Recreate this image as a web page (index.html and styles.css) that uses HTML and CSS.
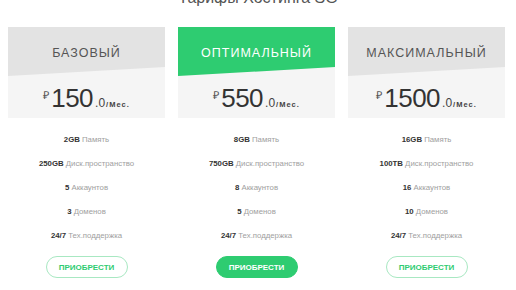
FILE: index.html
```html
<!DOCTYPE html>
<html lang="ru">
<head>
<meta charset="utf-8">
<link rel="stylesheet" href="styles.css">
</head>
<body>
<h1 class="page-title">Тарифы Хостинга SG</h1>
<div class="plans">
  <div class="plan">
    <div class="plan-head"><div class="plan-name">БАЗОВЫЙ</div></div>
    <div class="price"><span class="cur">₽</span><span class="amount">150</span><span class="dec">.0</span><span class="per">/Мес.</span></div>
    <ul class="features">
      <li><b>2GB</b> Память</li>
      <li><b>250GB</b> Диск.пространство</li>
      <li><b>5</b> Аккаунтов</li>
      <li><b>3</b> Доменов</li>
      <li><b>24/7</b> Тех.поддержка</li>
    </ul>
    <a class="btn">ПРИОБРЕСТИ</a>
  </div>
  <div class="plan plan-featured">
    <div class="plan-head"><div class="plan-name">ОПТИМАЛЬНЫЙ</div></div>
    <div class="price"><span class="cur">₽</span><span class="amount">550</span><span class="dec">.0</span><span class="per">/Мес.</span></div>
    <ul class="features">
      <li><b>8GB</b> Память</li>
      <li><b>750GB</b> Диск.пространство</li>
      <li><b>8</b> Аккаунтов</li>
      <li><b>5</b> Доменов</li>
      <li><b>24/7</b> Тех.поддержка</li>
    </ul>
    <a class="btn btn-solid">ПРИОБРЕСТИ</a>
  </div>
  <div class="plan">
    <div class="plan-head"><div class="plan-name">МАКСИМАЛЬНЫЙ</div></div>
    <div class="price"><span class="cur">₽</span><span class="amount">1500</span><span class="dec">.0</span><span class="per">/Мес.</span></div>
    <ul class="features">
      <li><b>16GB</b> Память</li>
      <li><b>100TB</b> Диск.пространство</li>
      <li><b>16</b> Аккаунтов</li>
      <li><b>10</b> Доменов</li>
      <li><b>24/7</b> Тех.поддержка</li>
    </ul>
    <a class="btn">ПРИОБРЕСТИ</a>
  </div>
</div>
</body>
</html>
```
FILE: styles.css
```css
html, body {
  margin: 0;
  padding: 0;
  background: #ffffff;
  font-family: "Liberation Sans", Arial, sans-serif;
  overflow: hidden;
}
.page-title {
  margin: -13px 0 0;
  height: 22px;
  line-height: 22px;
  font-size: 16px;
  font-weight: normal;
  color: #555;
  text-align: center;
}
.plans {
  display: grid;
  grid-template-columns: repeat(3, 157px);
  column-gap: 13px;
  padding: 18px 0 0 8px;
}
.plan {
  display: flex;
  flex-direction: column;
  align-items: center;
  background: linear-gradient(#f5f5f5, #f5f5f5) top / 100% 91px no-repeat;
}
.plan-head,
.price {
  align-self: stretch;
}
.plan-head {
  height: 49px;
  background: #e3e3e3;
  clip-path: polygon(0 0, 100% 0, 100% 40px, 0 100%);
  display: flex;
  align-items: flex-start;
  justify-content: center;
}
.plan-name {
  margin-top: 19px;
  font-size: 12.5px;
  letter-spacing: 1px;
  color: #555;
}
.plan-featured .plan-head {
  background: #2ecc71;
}
.plan-featured .plan-name {
  color: #fff;
}
.price {
  height: 42px;
  display: flex;
  align-items: baseline;
  justify-content: center;
  padding-top: 9px;
  box-sizing: border-box;
  color: #333;
}
.cur {
  font-size: 11px;
  position: relative;
  top: -8px;
  margin-right: 2px;
  color: #555;
}
.amount {
  font-size: 26px;
  line-height: 26px;
  letter-spacing: -0.5px;
}
.dec {
  font-size: 12px;
  margin-left: 2px;
  color: #444;
}
.per {
  font-size: 7.5px;
  font-weight: bold;
  letter-spacing: 1px;
  margin-left: 1px;
  color: #444;
}
.features {
  list-style: none;
  margin: 10px 0 0;
  padding: 0;
  text-align: center;
}
.features li {
  height: 24px;
  line-height: 24px;
  font-size: 7.8px;
  color: #a0a0a0;
}
.features b {
  color: #333;
}
.btn {
  margin-top: 8px;
  width: 82px;
  height: 22px;
  box-sizing: border-box;
  border: 1px solid #a8e8c2;
  border-radius: 11px;
  display: flex;
  align-items: center;
  justify-content: center;
  font-size: 8px;
  font-weight: bold;
  color: #2ecc71;
}
.btn-solid {
  background: #2ecc71;
  border-color: #2ecc71;
  color: #fff;
}
```
